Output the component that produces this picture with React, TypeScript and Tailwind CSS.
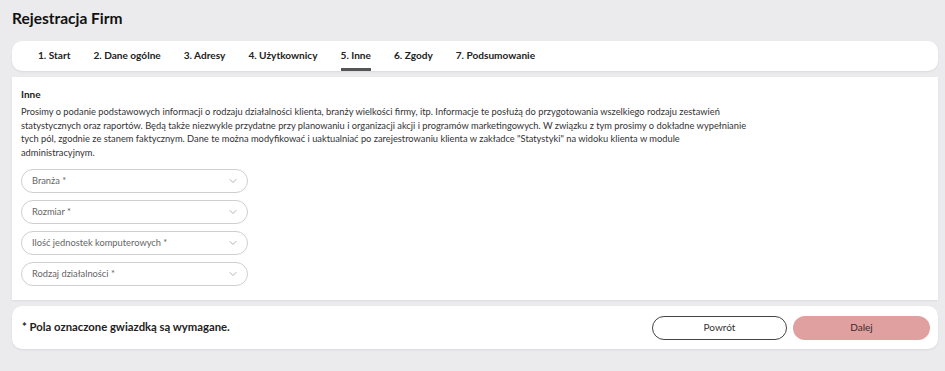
import { ChevronDown } from "lucide-react";

const tabs = [
  "1. Start",
  "2. Dane ogólne",
  "3. Adresy",
  "4. Użytkownicy",
  "5. Inne",
  "6. Zgody",
  "7. Podsumowanie",
];

const fields = [
  "Branża *",
  "Rozmiar *",
  "Ilość jednostek komputerowych *",
  "Rodzaj działalności *",
];

export default function App() {
  return (
    <div className="min-h-screen bg-[#ebebed] pl-3 pr-[7px] font-['Lato',sans-serif] text-[#333]">
      <h1 className="h-[41px] pt-[6px] text-[15.5px] font-bold text-[#111] leading-[24px]">Rejestracja Firm</h1>

      {/* zakładki */}
      <div className="flex h-[30px] items-stretch gap-[23px] rounded-[10px] bg-white pl-[26px] shadow-[0_1px_2px_rgba(0,0,0,0.08)]">
        {tabs.map((tab) => (
          <div
            key={tab}
            className={`flex items-center border-b-[3px] pt-[3px] text-[10.1px] font-bold text-[#222] ${
              tab === "5. Inne" ? "border-[#555]" : "border-transparent"
            }`}
          >
            {tab}
          </div>
        ))}
      </div>

      <div className="mt-[6px] h-[223px] bg-white px-[9px] pt-[10px] shadow-[0_1px_2px_rgba(0,0,0,0.06)]">
        <h2 className="text-[10px] font-bold leading-[14px] text-[#222]">Inne</h2>
        <p className="mt-[4px] text-[9.3px] leading-[13.6px] text-[#333]">
          Prosimy o podanie podstawowych informacji o rodzaju działalności klienta, branży wielkości firmy, itp. Informacje te posłużą do przygotowania wszelkiego rodzaju zestawień
          <br />
          statystycznych oraz raportów. Będą także niezwykle przydatne przy planowaniu i organizacji akcji i programów marketingowych. W związku z tym prosimy o dokładne wypełnianie
          <br />
          tych pól, zgodnie ze stanem faktycznym. Dane te można modyfikować i uaktualniać po zarejestrowaniu klienta w zakładce "Statystyki" na widoku klienta w module
          <br />
          administracyjnym.
        </p>

        <div className="mt-[10px] flex w-[227px] flex-col gap-[7px]">
          {fields.map((f) => (
            <div
              key={f}
              className="flex h-[24px] items-center justify-between rounded-full border border-[#cfcfcf] pl-[10px] pr-[8px]"
            >
              <span className="text-[9.3px] text-[#666]">{f}</span>
              <ChevronDown size={12} strokeWidth={1.5} className="text-[#999]" />
            </div>
          ))}
        </div>
      </div>

      <div className="mt-[6px] flex h-[43px] items-center justify-between rounded-[10px] bg-white pl-[10px] pr-[8px] shadow-[0_1px_2px_rgba(0,0,0,0.08)]">
        <span className="text-[11.3px] font-bold text-[#222]">* Pola oznaczone gwiazdką są wymagane.</span>
        <div className="flex gap-[6px]">
          <button className="h-[24px] w-[135px] rounded-full border border-[#444] bg-white text-[10px] text-[#333]">
            Powrót
          </button>
          <button className="h-[24px] w-[137px] rounded-full bg-[#e0a0a0] text-[10px] text-[#3a2a2a]">
            Dalej
          </button>
        </div>
      </div>
    </div>
  );
}
